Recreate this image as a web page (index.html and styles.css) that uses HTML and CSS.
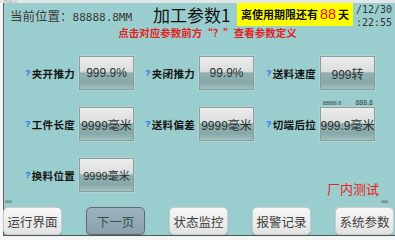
FILE: index.html
```html
<!DOCTYPE html>
<html lang="zh">
<head>
<meta charset="utf-8">
<title>加工参数1</title>
<link rel="stylesheet" href="styles.css">
</head>
<body>
<div class="screen">
  <div class="topstrip"><span class="tiny">P000 0</span></div>
  <div class="panel">
    <header class="header">
      <div class="pos"><span class="pos-label">当前位置：</span><span class="pos-val">88888.8MM</span></div>
      <div class="title">加工参数1</div>
      <div class="limit"><span class="limit-text">离使用期限还有</span><span class="days">88</span><span class="limit-text">天</span></div>
      <div class="date"><span>/12/30</span><span>:22:55</span></div>
    </header>
    <p class="notice">点击对应参数前方“？”查看参数定义</p>
    <div class="grid">
      <div class="lbl"><span class="q">?</span>夹开推力</div>
      <div class="val">999.9%</div>
      <div class="lbl"><span class="q">?</span>夹闭推力</div>
      <div class="val">99.9%</div>
      <div class="lbl"><span class="q">?</span>送料速度</div>
      <div class="val">999转</div>

      <div class="lbl"><span class="q">?</span>工件长度</div>
      <div class="val">9999毫米</div>
      <div class="lbl"><span class="q">?</span>送料偏差</div>
      <div class="val">9999毫米</div>
      <div class="lbl"><span class="q">?</span>切端后拉</div>
      <div class="val val-marked"><span class="mark-a">88888.8</span><span class="mark-b">888.8</span>999.9毫米</div>

      <div class="lbl"><span class="q">?</span>换料位置</div>
      <div class="val val-small">9999毫米</div>
      <div class="testing">厂内测试</div>
    </div>
    <div class="marks"><span>000</span><span>000</span></div>
    <nav class="nav">
      <div class="btn">运行界面</div>
      <div class="btn btn-active">下一页</div>
      <div class="btn">状态监控</div>
      <div class="btn">报警记录</div>
      <div class="btn">系统参数</div>
    </nav>
  </div>
</div>
</body>
</html>
```

FILE: styles.css
```css
* { box-sizing: border-box; }
html, body { margin: 0; padding: 0; }
body {
  background: #f4f4f4;
  font-family: "Noto Sans CJK SC", "Liberation Sans", sans-serif;
}
.screen {
  width: 395px;
  height: 240px;
  background: #f6f6f6;
  overflow: hidden;
}
.topstrip {
  height: 3px;
  background: #e2e6e6;
  padding-left: 4px;
  overflow: hidden;
}
.tiny {
  display: block;
  font-family: "Liberation Sans", sans-serif;
  font-size: 4px;
  line-height: 3px;
  color: #9aa0a0;
}
.panel {
  margin-left: 3px;
  height: 233px;
  background: #9acece;
  border-left: 1px solid #5a6464;
  border-bottom: 1px solid #4e5656;
  display: flex;
  flex-direction: column;
}
.header {
  height: 24px;
  display: flex;
  align-items: center;
  padding-left: 6px;
}
.pos {
  width: 143px;
  color: #3a3a3a;
  display: flex;
  align-items: baseline;
}
.pos-label { font-size: 12.5px; }
.pos-val {
  font-family: "DejaVu Sans Mono", monospace;
  font-size: 11px;
}
.title {
  width: 84px;
  font-size: 17px;
  color: #111;
  line-height: 22px;
  white-space: nowrap;
}
.limit {
  width: 116px;
  height: 23px;
  margin-top: -2px;
  background: #ffff00;
  display: flex;
  align-items: center;
  justify-content: center;
  gap: 1px;
  white-space: nowrap;
}
.limit-text {
  font-size: 11px;
  font-weight: 700;
  color: #111;
}
.days {
  font-family: "Liberation Sans", sans-serif;
  font-size: 14.5px;
  color: #ee1111;
  margin: 0 1px;
}
.date {
  margin-left: 3px;
  align-self: flex-start;
  padding-top: 1px;
  display: flex;
  flex-direction: column;
  font-family: "DejaVu Sans Mono", monospace;
  font-size: 10px;
  line-height: 12.5px;
  color: #333;
}
.notice {
  margin: 0;
  height: 11px;
  line-height: 11px;
  padding-left: 16px;
  text-align: center;
  font-size: 10.5px;
  font-weight: 700;
  color: #e02424;
}
.grid {
  margin-top: 18px;
  display: grid;
  grid-template-columns: 75px 55px 65px 55px 66px 55px;
  grid-auto-rows: 34px;
  row-gap: 17px;
}
.lbl {
  display: flex;
  align-items: center;
  justify-content: flex-end;
  padding-right: 4px;
  font-size: 10.5px;
  font-weight: 700;
  color: #141414;
  letter-spacing: 0.3px;
}
.q {
  font-family: "Liberation Sans", sans-serif;
  font-size: 9px;
  font-weight: 700;
  color: #2f6cf0;
  margin-right: 1px;
}
.val {
  position: relative;
  display: flex;
  align-items: center;
  justify-content: center;
  border: 1px solid #8d9d9d;
  background: linear-gradient(to bottom, #ececec 0%, #dcdede 45%, #8fb1b1 50%, #87a9a9 80%, #a2c0c0 100%);
  box-shadow: 0 0 0 1px rgba(190, 215, 215, 0.6);
  font-family: "Liberation Sans", "Noto Sans CJK SC", sans-serif;
  font-size: 12px;
  color: #303030;
  white-space: nowrap;
}
.val-small { font-size: 11px; }
.mark-a, .mark-b {
  position: absolute;
  bottom: 100%;
  font-family: "Liberation Sans", sans-serif;
  color: #3c3c3c;
  line-height: 1;
  margin-bottom: 2px;
}
.mark-a { left: 2px; font-size: 5px; }
.mark-b { right: 1px; font-size: 7px; }
.testing {
  grid-column: 5 / 7;
  justify-self: end;
  align-self: end;
  margin-right: -4px;
  margin-bottom: -4px;
  font-size: 13px;
  line-height: 14px;
  color: #e82222;
}
.marks {
  margin-top: 7px;
  height: 5px;
  display: flex;
  justify-content: space-between;
  padding: 0 7px 0 1px;
  font-family: "Liberation Sans", sans-serif;
  font-size: 4px;
  line-height: 5px;
  color: #333;
}
.nav {
  margin-top: 3px;
  margin-left: -1px;
  display: flex;
  gap: 24px;
}
.btn {
  width: 59px;
  height: 28px;
  border-radius: 5px;
  border: 1px solid #c9cccc;
  background: linear-gradient(to bottom, #f7f7f7, #e2e2e2);
  box-shadow: 0 1px 1px rgba(80, 100, 100, 0.35);
  display: flex;
  align-items: center;
  justify-content: center;
  font-size: 12.5px;
  color: #404040;
}
.btn-active {
  background: linear-gradient(to bottom, #9db2bc, #8aa0aa);
  border: 1px solid #5f6d72;
  color: #2c5650;
}
```
